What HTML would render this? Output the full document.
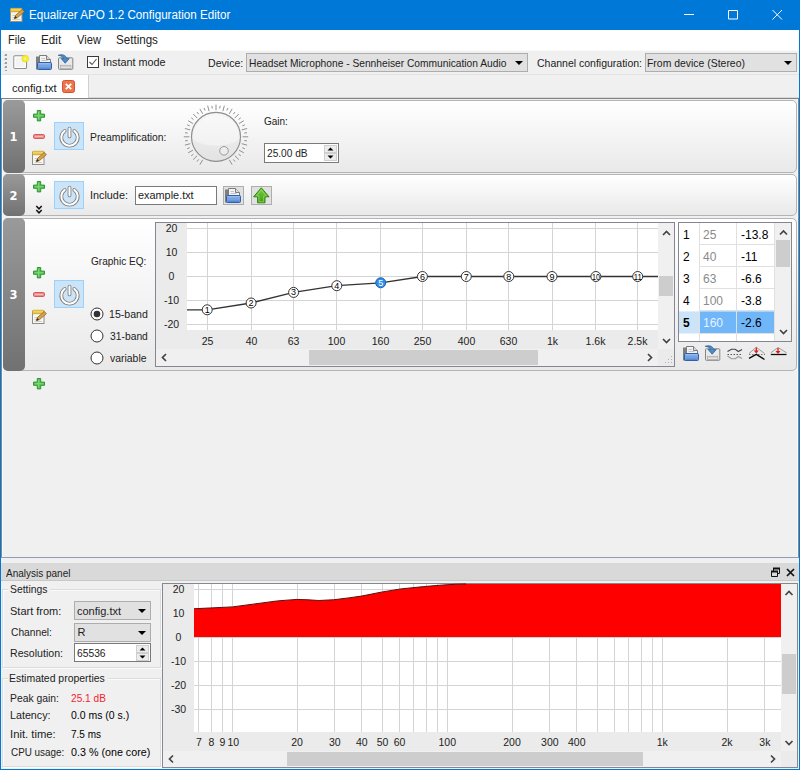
<!DOCTYPE html>
<html><head><meta charset="utf-8"><title>Equalizer APO 1.2 Configuration Editor</title>
<style>
*{box-sizing:border-box;margin:0;padding:0}
html,body{width:800px;height:770px;overflow:hidden;background:#f0f0f0;font-family:"Liberation Sans","DejaVu Sans",sans-serif;font-size:11px;color:#000}
.a{position:absolute}
#win{position:absolute;left:0;top:0;width:800px;height:770px;overflow:hidden;background:#f0f0f0}
.t{position:absolute;white-space:nowrap;line-height:14px;height:14px;font-size:11px;transform-origin:0 50%;color:#222}
.combo{position:absolute;background:#e1e1e1;border:1px solid #adadad}
.arr{position:absolute;width:0;height:0;border-left:4px solid transparent;border-right:4px solid transparent;border-top:4px solid #000}
.row{position:absolute;left:3px;width:794px;border:1px solid #b4b4b4;border-radius:5px;background:linear-gradient(#ffffff,#e9e9e9)}
.strip{position:absolute;left:-1px;top:-1px;bottom:-1px;width:22px;border-radius:5px;background:linear-gradient(#9a9a9a,#717171);color:#fff;font-weight:bold;font-size:11.500px;font-family:"DejaVu Sans","Liberation Sans",sans-serif}
.strip span{position:absolute;left:-.5px;width:22px;text-align:center;top:50%;margin-top:-7.500px;line-height:16px}
.pw{position:absolute;left:50px;width:30px;height:28px;background:#cce4f7;border:1px solid #99d1ff}
.grp{position:absolute;border:1px solid #dcdcdc;box-shadow:1px 1px 0 #fbfbfb, inset 1px 1px 0 #fbfbfb}
</style></head><body>
<div id="win">
<div class="a" style="left:0;top:0;width:800px;height:30px;background:#0078d7"></div>
<div class="t" id="ttl" style="left:29.03px;top:8px;font-size:12px;color:#fff;transform:scaleX(0.9710)">Equalizer APO 1.2 Configuration Editor</div>
<svg class="a" style="left:9px;top:7px" width="16" height="16" viewBox="0 0 16 16"><rect x="1.500" y="2.500" width="11.500" height="12" fill="#f6f4ea" stroke="#9a927c"/><rect x="1.500" y="1.300" width="11.500" height="3.400" rx=".8" fill="#eccb4c" stroke="#c79a22" stroke-width=".8"/><path d="M3 1.600v1.200M5 1.600v1.200M7 1.600v1.200M9 1.600v1.200M11 1.600v1.200" stroke="#f8e48c" stroke-width=".9"/><path d="M3.500 8.500h5M3.500 10.500h3M3.500 12.500h7.500" stroke="#cfcfc8"/><path d="M5.300 11.700l1.200-3.300 6.800-5.900 2 2.200-6.800 5.900z" fill="#d9a24e" stroke="#8a6224" stroke-width=".8"/><path d="M5.300 11.700l1-2.700 1.700 1.800z" fill="#3a2a1a"/></svg>
<svg class="a" style="left:662px;top:0" width="138" height="30"><path d="M22 14.500h10M66.500 10.500h9v8.500h-9zM110.500 10l9.500 9.500m0-9.500l-9.500 9.500" stroke="#fff" fill="none" stroke-width="1"/></svg>
<div class="a" style="left:0;top:30px;width:800px;height:20px;background:#fff"></div>
<div class="t" id="m1" style="left:8.08px;top:33px;font-size:12px;transform:scaleX(0.9167)">File</div>
<div class="t" id="m2" style="left:40.52px;top:33px;font-size:12px;transform:scaleX(0.9750)">Edit</div>
<div class="t" id="m3" style="left:76.50px;top:33px;font-size:12px;transform:scaleX(0.9308)">View</div>
<div class="t" id="m4" style="left:116.03px;top:33px;font-size:12px;transform:scaleX(0.9667)">Settings</div>
<div class="a" style="left:0;top:50px;width:800px;height:1px;background:#fafafa"></div>
<div class="a" style="left:0;top:74px;width:800px;height:1px;background:#e3e3e3"></div>
<svg class="a" style="left:4px;top:53px" width="4" height="18"><rect x="1" y="1" width="2" height="2" fill="#a0a0a0"/><rect x="0" y="2" width="1" height="1" fill="#c8c8c8"/><rect x="1" y="5" width="2" height="2" fill="#a0a0a0"/><rect x="0" y="6" width="1" height="1" fill="#c8c8c8"/><rect x="1" y="9" width="2" height="2" fill="#a0a0a0"/><rect x="0" y="10" width="1" height="1" fill="#c8c8c8"/><rect x="1" y="13" width="2" height="2" fill="#a0a0a0"/><rect x="0" y="14" width="1" height="1" fill="#c8c8c8"/><rect x="1" y="17" width="2" height="2" fill="#a0a0a0"/><rect x="0" y="18" width="1" height="1" fill="#c8c8c8"/></svg>
<svg class="a" style="left:12px;top:54px" width="18" height="16" viewBox="0 0 18 16"><rect x="1.900" y="1.900" width="12.600" height="12.600" rx="1" fill="#f4f4f4" stroke="#8c8c8c" stroke-width="1.100"/><rect x="3" y="3" width="10.400" height="10.400" fill="none" stroke="#fff"/><circle cx="13.200" cy="4.700" r="3.400" fill="#f3ec3a" stroke="#e6de2a" stroke-width=".8"/><circle cx="13.200" cy="4.700" r="1" fill="#fbf8a0"/></svg>
<svg class="a" style="left:35px;top:54px" width="18" height="17" viewBox="0 0 18 17"><path d="M1 2.500h3.500v13h-3.500z" fill="#7e7e7e"/><path d="M4.500 1.500h7l4 4v7h-11z" fill="#f3f3f3" stroke="#7c7c7c"/><path d="M11.500 1.500v4h4" fill="#dcdcdc" stroke="#7c7c7c"/><path d="M6.500 4.500h3.500M6.500 6.500h6" stroke="#c4c4c4"/><rect x="2.500" y="8.500" width="14" height="7" rx="1" fill="#75a2e0" stroke="#2f60aa"/><path d="M3.500 9.800h12" stroke="#a4c6f0"/><path d="M3.500 14.200h12" stroke="#4a7ec8"/></svg>
<svg class="a" style="left:57px;top:54px" width="17" height="17" viewBox="0 0 17 17"><rect x="1.500" y="3.800" width="14.300" height="11.500" rx=".8" fill="#e9e9e9" stroke="#858585"/><rect x="3.500" y="11.300" width="10.300" height="3" fill="#f8f8f8" stroke="#a0a0a0" stroke-width=".7"/><path d="M4.500 12.800h8.500" stroke="#8a8a8a" stroke-dasharray="1 1"/><path d="M1.200 1.300c4-1.300 7.800-.3 8.400 3.300h2.600l-4 4.600-4-4.600h2.500c-.4-1.700-2.300-2.900-5.500-3.300z" fill="#4d8bc8" stroke="#2a6296" stroke-width=".8" stroke-linejoin="round"/></svg>
<div class="a" style="left:87px;top:56px;width:12px;height:12px;background:#fff;border:1px solid #3a3a3a"></div>
<svg class="a" style="left:87px;top:56px" width="12" height="12"><path d="M2.500 6l2.500 2.500 4.500-5.500" stroke="#555" fill="none" stroke-width="1.100"/></svg>
<div class="t" id="im" style="left:103.02px;top:55px;transform:scaleX(0.9839)">Instant mode</div>
<div class="t" id="dv" style="left:207.74px;top:56px;transform:scaleX(0.9600)">Device:</div>
<div class="combo" style="left:246px;top:53px;width:282px;height:19px"></div>
<div class="t" id="hm" style="left:248.57px;top:56px;transform:scaleX(0.9293)">Headset Microphone - Sennheiser Communication Audio</div>
<div class="arr" style="left:515px;top:61px"></div>
<div class="t" id="cc" style="left:537.00px;top:56px;transform:scaleX(0.9541)">Channel configuration:</div>
<div class="combo" style="left:645px;top:53px;width:152px;height:19px"></div>
<div class="t" id="fd" style="left:647.35px;top:56px;transform:scaleX(0.9480)">From device (Stereo)</div>
<div class="arr" style="left:784px;top:61px"></div>
<div class="a" style="left:0;top:97px;width:800px;height:1px;background:#dadada"></div>
<div class="a" style="left:0;top:98px;width:800px;height:1px;background:#828282"></div>
<div class="a" style="left:1px;top:75px;width:88px;height:23px;background:#fff;border-right:1px solid #d0d0d0"></div>
<div class="t" id="cf" style="left:12.40px;top:81px;transform:scaleX(1.0136)">config.txt</div>
<svg class="a" style="left:62px;top:80px" width="13" height="13"><rect x=".5" y=".5" width="12" height="12" rx="2" fill="#e9764c" stroke="#dc4f30"/><path d="M3.800 3.800l5.400 5.400m0-5.400l-5.400 5.400" stroke="#fff" stroke-width="1.900"/></svg>
<div class="a" style="left:1px;top:99px;width:797px;height:458px;background:#f0f0f0"></div>
<div class="a" style="left:1px;top:557px;width:798px;height:1px;background:#8e9db3"></div>
<div class="a" style="left:1px;top:99px;width:1px;height:458px;background:#878787"></div>
<div class="a" style="left:2px;top:99px;width:1px;height:458px;background:#f8f8f8"></div>
<div class="a" style="left:798px;top:99px;width:1px;height:458px;background:#878787"></div>
<div class="a" style="left:797px;top:99px;width:1px;height:458px;background:#f8f8f8"></div>
<div class="row" style="top:100px;height:73px"><div class="strip"><span>1</span></div></div>
<svg class="a" style="left:32.5px;top:109.8px" width="12" height="12"><path d="M4.300 .5h3.400v3.600h3.800v3.200h-3.800v3.600h-3.400v-3.600h-3.800v-3.200h3.800z" fill="#5fc456" stroke="#2c9634" stroke-width="1" stroke-linejoin="round"/><path d="M5.500 2v7.400M2 5.700h8" stroke="#7fd678" stroke-width="1"/></svg>
<svg class="a" style="left:32.5px;top:134.2px" width="12" height="5"><rect x=".5" y=".5" width="11" height="4" rx="1.200" fill="#ec8c8c" stroke="#d65c5c"/><path d="M2 2.500h8" stroke="#f6bcbc"/></svg>
<svg class="a" style="left:31px;top:150px" width="16" height="16"><rect x="1.500" y="2.500" width="11.500" height="12" fill="#f8f7f0" stroke="#8e8e8e"/><rect x="1.500" y="1.300" width="11.500" height="3.400" rx=".8" fill="#eccb4c" stroke="#c79a22" stroke-width=".8"/><path d="M3 1.600v1.200M5 1.600v1.200M7 1.600v1.200M9 1.600v1.200M11 1.600v1.200" stroke="#f8e48c" stroke-width=".9"/><path d="M3.500 8.500h5M3.500 10.500h3M3.500 12.500h7.500" stroke="#cfcfcf"/><path d="M5.300 11.700l1.200-3.300 6.800-5.900 2 2.200-6.800 5.900z" fill="#d9a24e" stroke="#8a6224" stroke-width=".8"/><path d="M5.300 11.700l1-2.700 1.700 1.800z" fill="#3a2a1a"/></svg>
<div class="a" style="left:54px;top:122px;width:30px;height:28px;background:#cce4f7;border:1px solid #99d1ff"></div>
<svg class="a" style="left:54px;top:122px" width="30" height="28"><g fill="none" stroke-linecap="round"><path d="M10.700 8.900a8.200 8.200 0 1 0 9.600 0" stroke="#7e7e7e" stroke-width="3.700"/><path d="M15.500 6.500v8" stroke="#7e7e7e" stroke-width="3.700"/><path d="M10.700 8.900a8.200 8.200 0 1 0 9.600 0" stroke="#fff" stroke-width="2"/><path d="M15.500 6.500v8" stroke="#fff" stroke-width="2"/></g></svg>
<div class="t" id="pa" style="left:90.06px;top:130px;transform:scaleX(0.9400)">Preamplification:</div>
<svg class="a" style="left:180px;top:101px" width="72" height="72" viewBox="-36 -35.800 72 72"><defs><linearGradient id="dg" x1="0" y1="0" x2="0" y2="1"><stop offset="0" stop-color="#f6f6f6"/><stop offset="1" stop-color="#e2e2e2"/></linearGradient></defs><path d="M-13.30 23.04L-16.10 27.89" stroke="#909090" stroke-width="1"/><path d="M-17.35 22.61L-18.99 24.75" stroke="#909090" stroke-width="1"/><path d="M-18.81 18.81L-22.77 22.77" stroke="#909090" stroke-width="1"/><path d="M-22.61 17.35L-24.75 18.99" stroke="#909090" stroke-width="1"/><path d="M-23.04 13.30L-27.89 16.10" stroke="#909090" stroke-width="1"/><path d="M-26.33 10.91L-28.83 11.94" stroke="#909090" stroke-width="1"/><path d="M-25.69 6.88L-31.10 8.33" stroke="#909090" stroke-width="1"/><path d="M-28.26 3.72L-30.93 4.07" stroke="#909090" stroke-width="1"/><path d="M-26.60 -0.00L-32.20 -0.00" stroke="#909090" stroke-width="1"/><path d="M-28.26 -3.72L-30.93 -4.07" stroke="#909090" stroke-width="1"/><path d="M-25.69 -6.88L-31.10 -8.33" stroke="#909090" stroke-width="1"/><path d="M-26.33 -10.91L-28.83 -11.94" stroke="#909090" stroke-width="1"/><path d="M-23.04 -13.30L-27.89 -16.10" stroke="#909090" stroke-width="1"/><path d="M-22.61 -17.35L-24.75 -18.99" stroke="#909090" stroke-width="1"/><path d="M-18.81 -18.81L-22.77 -22.77" stroke="#909090" stroke-width="1"/><path d="M-17.35 -22.61L-18.99 -24.75" stroke="#909090" stroke-width="1"/><path d="M-13.30 -23.04L-16.10 -27.89" stroke="#909090" stroke-width="1"/><path d="M-10.91 -26.33L-11.94 -28.83" stroke="#909090" stroke-width="1"/><path d="M-6.88 -25.69L-8.33 -31.10" stroke="#909090" stroke-width="1"/><path d="M-3.72 -28.26L-4.07 -30.93" stroke="#909090" stroke-width="1"/><path d="M0.00 -26.60L0.00 -32.20" stroke="#909090" stroke-width="1"/><path d="M3.72 -28.26L4.07 -30.93" stroke="#909090" stroke-width="1"/><path d="M6.88 -25.69L8.33 -31.10" stroke="#909090" stroke-width="1"/><path d="M10.91 -26.33L11.94 -28.83" stroke="#909090" stroke-width="1"/><path d="M13.30 -23.04L16.10 -27.89" stroke="#909090" stroke-width="1"/><path d="M17.35 -22.61L18.99 -24.75" stroke="#909090" stroke-width="1"/><path d="M18.81 -18.81L22.77 -22.77" stroke="#909090" stroke-width="1"/><path d="M22.61 -17.35L24.75 -18.99" stroke="#909090" stroke-width="1"/><path d="M23.04 -13.30L27.89 -16.10" stroke="#909090" stroke-width="1"/><path d="M26.33 -10.91L28.83 -11.94" stroke="#909090" stroke-width="1"/><path d="M25.69 -6.88L31.10 -8.33" stroke="#909090" stroke-width="1"/><path d="M28.26 -3.72L30.93 -4.07" stroke="#909090" stroke-width="1"/><path d="M26.60 -0.00L32.20 -0.00" stroke="#909090" stroke-width="1"/><path d="M28.26 3.72L30.93 4.07" stroke="#909090" stroke-width="1"/><path d="M25.69 6.88L31.10 8.33" stroke="#909090" stroke-width="1"/><path d="M26.33 10.91L28.83 11.94" stroke="#909090" stroke-width="1"/><path d="M23.04 13.30L27.89 16.10" stroke="#909090" stroke-width="1"/><path d="M22.61 17.35L24.75 18.99" stroke="#909090" stroke-width="1"/><path d="M18.81 18.81L22.77 22.77" stroke="#909090" stroke-width="1"/><path d="M17.35 22.61L18.99 24.75" stroke="#909090" stroke-width="1"/><path d="M13.30 23.04L16.10 27.89" stroke="#909090" stroke-width="1"/><circle cx="0" cy="0" r="24.500" fill="url(#dg)" stroke="#8e8e8e" stroke-width="1.150"/><path d="M-23.500 2a23.500 23.500 0 0 1 47 0c-8 9-39 9-47 0z" fill="#fff" opacity=".4"/><circle cx="8" cy="14" r="4.300" fill="#ececec" stroke="#9a9a9a" stroke-width="1"/></svg>
<div class="t" id="gn" style="left:263.70px;top:114px;transform:scaleX(0.9077)">Gain:</div>
<div class="a" style="left:264px;top:143px;width:75px;height:20px;background:#fff;border:1px solid #7a7a7a"></div>
<div class="t" id="g25" style="left:267.00px;top:146px;transform:scaleX(0.9227)">25.00 dB</div>
<svg class="a" style="left:324px;top:145px" width="13" height="16"><rect x=".5" y=".5" width="12" height="7" fill="#ececec" stroke="#cfcfcf"/><rect x=".5" y="8.500" width="12" height="7" fill="#ececec" stroke="#cfcfcf"/><path d="M3.500 5.500l3-3 3 3zM3.500 10.500l3 3 3-3z" fill="#000"/></svg>
<div class="row" style="top:174px;height:42px"><div class="strip"><span>2</span></div></div>
<svg class="a" style="left:32.5px;top:180.8px" width="12" height="12"><path d="M4.300 .5h3.400v3.600h3.800v3.200h-3.800v3.600h-3.400v-3.600h-3.800v-3.200h3.800z" fill="#5fc456" stroke="#2c9634" stroke-width="1" stroke-linejoin="round"/><path d="M5.500 2v7.400M2 5.700h8" stroke="#7fd678" stroke-width="1"/></svg>
<div class="a" style="left:54px;top:181px;width:30px;height:28px;background:#cce4f7;border:1px solid #99d1ff"></div>
<svg class="a" style="left:54px;top:181px" width="30" height="28"><g fill="none" stroke-linecap="round"><path d="M10.700 8.900a8.200 8.200 0 1 0 9.600 0" stroke="#7e7e7e" stroke-width="3.700"/><path d="M15.500 6.500v8" stroke="#7e7e7e" stroke-width="3.700"/><path d="M10.700 8.900a8.200 8.200 0 1 0 9.600 0" stroke="#fff" stroke-width="2"/><path d="M15.500 6.500v8" stroke="#fff" stroke-width="2"/></g></svg>
<svg class="a" style="left:35px;top:205px" width="8" height="10"><path d="M1.300 1l2.700 2.800 2.700-2.800M1.300 5l2.700 2.800 2.700-2.800" fill="none" stroke="#111" stroke-width="1.500"/></svg>
<div class="t" id="inc" style="left:90.02px;top:188px;transform:scaleX(0.9838)">Include:</div>
<div class="a" style="left:135px;top:186px;width:82px;height:19px;background:#fff;border:1px solid #7a7a7a"></div>
<div class="t" id="ex" style="left:137.60px;top:188px;transform:scaleX(0.9893)">example.txt</div>
<div class="a" style="left:223px;top:186px;width:21px;height:19px;background:#e1e1e1;border:1px solid #adadad"></div>
<svg class="a" style="left:224px;top:186.500px" width="18" height="17" viewBox="0 0 18 17"><path d="M1 2.500h3.500v13h-3.500z" fill="#7e7e7e"/><path d="M4.500 1.500h7l4 4v7h-11z" fill="#f3f3f3" stroke="#7c7c7c"/><path d="M11.500 1.500v4h4" fill="#dcdcdc" stroke="#7c7c7c"/><path d="M6.500 4.500h3.500M6.500 6.500h6" stroke="#c4c4c4"/><rect x="2.500" y="8.500" width="14" height="7" rx="1" fill="#75a2e0" stroke="#2f60aa"/><path d="M3.500 9.800h12" stroke="#a4c6f0"/><path d="M3.500 14.200h12" stroke="#4a7ec8"/></svg>
<div class="a" style="left:251px;top:186px;width:21px;height:19px;background:#e1e1e1;border:1px solid #adadad"></div>
<svg class="a" style="left:252px;top:186px" width="19" height="19"><defs><linearGradient id="ug" x1="0" y1="0" x2="0" y2="1"><stop offset="0" stop-color="#7ad046"/><stop offset="1" stop-color="#3f9e14"/></linearGradient></defs><path d="M9.300 1.800l7.700 9h-4v6h-7.400v-6h-4z" fill="url(#ug)" stroke="#2f8410" stroke-linejoin="round"/><path d="M9.300 3.800l5 6h-2.600v6h-4.800v-6h-2.600z" fill="none" stroke="#a4e27c" stroke-width=".8" opacity=".8"/></svg>
<div class="row" style="top:218px;height:153px"><div class="strip"><span>3</span></div></div>
<svg class="a" style="left:32.5px;top:266.8px" width="12" height="12"><path d="M4.300 .5h3.400v3.600h3.800v3.200h-3.800v3.600h-3.400v-3.600h-3.800v-3.200h3.800z" fill="#5fc456" stroke="#2c9634" stroke-width="1" stroke-linejoin="round"/><path d="M5.500 2v7.400M2 5.700h8" stroke="#7fd678" stroke-width="1"/></svg>
<svg class="a" style="left:32.5px;top:292.2px" width="12" height="5"><rect x=".5" y=".5" width="11" height="4" rx="1.200" fill="#ec8c8c" stroke="#d65c5c"/><path d="M2 2.500h8" stroke="#f6bcbc"/></svg>
<svg class="a" style="left:31px;top:309px" width="16" height="16"><rect x="1.500" y="2.500" width="11.500" height="12" fill="#f8f7f0" stroke="#8e8e8e"/><rect x="1.500" y="1.300" width="11.500" height="3.400" rx=".8" fill="#eccb4c" stroke="#c79a22" stroke-width=".8"/><path d="M3 1.600v1.200M5 1.600v1.200M7 1.600v1.200M9 1.600v1.200M11 1.600v1.200" stroke="#f8e48c" stroke-width=".9"/><path d="M3.500 8.500h5M3.500 10.500h3M3.500 12.500h7.500" stroke="#cfcfcf"/><path d="M5.300 11.700l1.200-3.300 6.800-5.900 2 2.200-6.800 5.900z" fill="#d9a24e" stroke="#8a6224" stroke-width=".8"/><path d="M5.300 11.700l1-2.700 1.700 1.800z" fill="#3a2a1a"/></svg>
<div class="a" style="left:54px;top:280px;width:30px;height:28px;background:#cce4f7;border:1px solid #99d1ff"></div>
<svg class="a" style="left:54px;top:280px" width="30" height="28"><g fill="none" stroke-linecap="round"><path d="M10.700 8.900a8.200 8.200 0 1 0 9.600 0" stroke="#7e7e7e" stroke-width="3.700"/><path d="M15.500 6.500v8" stroke="#7e7e7e" stroke-width="3.700"/><path d="M10.700 8.900a8.200 8.200 0 1 0 9.600 0" stroke="#fff" stroke-width="2"/><path d="M15.500 6.500v8" stroke="#fff" stroke-width="2"/></g></svg>
<div class="t" id="geq" style="left:91.00px;top:254px;transform:scaleX(0.9133)">Graphic EQ:</div>
<svg class="a" style="left:90px;top:307px" width="14" height="14"><circle cx="7" cy="7" r="6" fill="#fff" stroke="#333"/><circle cx="7" cy="7" r="3.300" fill="#333"/></svg>
<div class="t" id="b15" style="left:109.04px;top:307px;transform:scaleX(0.9615)">15-band</div>
<svg class="a" style="left:90px;top:329px" width="14" height="14"><circle cx="7" cy="7" r="6" fill="#fff" stroke="#333"/></svg>
<div class="t" id="b31" style="left:110.00px;top:329px;transform:scaleX(0.9375)">31-band</div>
<svg class="a" style="left:90px;top:351px" width="14" height="14"><circle cx="7" cy="7" r="6" fill="#fff" stroke="#333"/></svg>
<div class="t" id="bvar" style="left:110.00px;top:351px;transform:scaleX(0.9474)">variable</div>
<svg class="a" style="left:155px;top:222px" width="520" height="145" font-family="Liberation Sans, sans-serif" font-size="11"><rect x=".5" y=".5" width="519" height="144" fill="#ebebeb" stroke="#828790"/><rect x="32" y="1" width="471" height="107" fill="#fff"/><path d="M32 6.5H503" stroke="#d4d4d4"/><text x="16.5" y="9.8" text-anchor="middle" font-size="10.500" fill="#222">20</text><path d="M32 30.5H503" stroke="#d4d4d4"/><text x="16.5" y="33.8" text-anchor="middle" font-size="10.500" fill="#222">10</text><path d="M32 54.5H503" stroke="#d4d4d4"/><text x="16.5" y="57.8" text-anchor="middle" font-size="10.500" fill="#222">0</text><path d="M32 78.5H503" stroke="#d4d4d4"/><text x="16.5" y="81.8" text-anchor="middle" font-size="10.500" fill="#222">-10</text><path d="M32 102.5H503" stroke="#d4d4d4"/><text x="16.5" y="105.8" text-anchor="middle" font-size="10.500" fill="#222">-20</text><path d="M52.5 1V108" stroke="#d4d4d4"/><text x="52.5" y="122.80000000000001" text-anchor="middle" font-size="10.500" fill="#222">25</text><path d="M96.5 1V108" stroke="#d4d4d4"/><text x="96.5" y="122.80000000000001" text-anchor="middle" font-size="10.500" fill="#222">40</text><path d="M138.5 1V108" stroke="#d4d4d4"/><text x="138.5" y="122.80000000000001" text-anchor="middle" font-size="10.500" fill="#222">63</text><path d="M181.5 1V108" stroke="#d4d4d4"/><text x="181.5" y="122.80000000000001" text-anchor="middle" font-size="10.500" fill="#222">100</text><path d="M225.5 1V108" stroke="#d4d4d4"/><text x="225.5" y="122.80000000000001" text-anchor="middle" font-size="10.500" fill="#222">160</text><path d="M267.5 1V108" stroke="#d4d4d4"/><text x="267.5" y="122.80000000000001" text-anchor="middle" font-size="10.500" fill="#222">250</text><path d="M311.5 1V108" stroke="#d4d4d4"/><text x="311.5" y="122.80000000000001" text-anchor="middle" font-size="10.500" fill="#222">400</text><path d="M353.5 1V108" stroke="#d4d4d4"/><text x="353.5" y="122.80000000000001" text-anchor="middle" font-size="10.500" fill="#222">630</text><path d="M397.5 1V108" stroke="#d4d4d4"/><text x="397.5" y="122.80000000000001" text-anchor="middle" font-size="10.500" fill="#222">1k</text><path d="M440.5 1V108" stroke="#d4d4d4"/><text x="440.5" y="122.80000000000001" text-anchor="middle" font-size="10.500" fill="#222">1.6k</text><path d="M482.5 1V108" stroke="#d4d4d4"/><text x="482.5" y="122.80000000000001" text-anchor="middle" font-size="10.500" fill="#222">2.5k</text><path d="M32.0 87.8L52.2 87.8L96.1 81.0L138.6 70.4L181.8 63.7L225.7 60.8L267.4 54.5L311.3 54.5L353.8 54.5L397.0 54.5L440.9 54.5L482.7 54.5L503.0 54.5" fill="none" stroke="#333" stroke-width="1.300"/><circle cx="52.2" cy="87.8" r="5" fill="#fff" stroke="#333" stroke-width="1"/><text x="52.2" y="90.8" text-anchor="middle" font-size="9" fill="#000">1</text><circle cx="96.1" cy="81.0" r="5" fill="#fff" stroke="#333" stroke-width="1"/><text x="96.1" y="84.0" text-anchor="middle" font-size="9" fill="#000">2</text><circle cx="138.6" cy="70.4" r="5" fill="#fff" stroke="#333" stroke-width="1"/><text x="138.6" y="73.4" text-anchor="middle" font-size="9" fill="#000">3</text><circle cx="181.8" cy="63.7" r="5" fill="#fff" stroke="#333" stroke-width="1"/><text x="181.8" y="66.7" text-anchor="middle" font-size="9" fill="#000">4</text><circle cx="225.7" cy="60.8" r="5" fill="#2f8fe8" stroke="#1c5fb0" stroke-width="1"/><text x="225.7" y="63.8" text-anchor="middle" font-size="9" fill="#fff">5</text><circle cx="267.4" cy="54.5" r="5" fill="#fff" stroke="#333" stroke-width="1"/><text x="267.4" y="57.5" text-anchor="middle" font-size="9" fill="#000">6</text><circle cx="311.3" cy="54.5" r="5" fill="#fff" stroke="#333" stroke-width="1"/><text x="311.3" y="57.5" text-anchor="middle" font-size="9" fill="#000">7</text><circle cx="353.8" cy="54.5" r="5" fill="#fff" stroke="#333" stroke-width="1"/><text x="353.8" y="57.5" text-anchor="middle" font-size="9" fill="#000">8</text><circle cx="397.0" cy="54.5" r="5" fill="#fff" stroke="#333" stroke-width="1"/><text x="397.0" y="57.5" text-anchor="middle" font-size="9" fill="#000">9</text><circle cx="440.9" cy="54.5" r="5" fill="#fff" stroke="#333" stroke-width="1"/><text x="440.9" y="57.5" text-anchor="middle" font-size="9" fill="#000" textLength="8" lengthAdjust="spacingAndGlyphs">10</text><circle cx="482.7" cy="54.5" r="5" fill="#fff" stroke="#333" stroke-width="1"/><text x="482.7" y="57.5" text-anchor="middle" font-size="9" fill="#000" textLength="8" lengthAdjust="spacingAndGlyphs">11</text><rect x="503" y="1" width="16" height="126" fill="#f0f0f0"/><rect x="504" y="54" width="14" height="20" fill="#cdcdcd"/><path d="M508 13l3.500-3.500 3.500 3.500M508 117l3.500 3.500 3.500-3.500" fill="none" stroke="#444" stroke-width="1.700"/><rect x="1" y="127" width="502" height="17" fill="#f0f0f0"/><rect x="154" y="128" width="229" height="15" fill="#cdcdcd"/><path d="M11 132l-3.500 3.500 3.500 3.500M493 132l3.500 3.500-3.500 3.500" fill="none" stroke="#444" stroke-width="1.700"/><rect x="516" y="134" width="1" height="1" fill="#b0b0b0"/><rect x="516" y="137" width="1" height="1" fill="#b0b0b0"/><rect x="516" y="140" width="1" height="1" fill="#b0b0b0"/><rect x="513" y="137" width="1" height="1" fill="#b0b0b0"/><rect x="513" y="140" width="1" height="1" fill="#b0b0b0"/><rect x="510" y="140" width="1" height="1" fill="#b0b0b0"/></svg>
<svg class="a" style="left:678px;top:222px" width="114" height="120" font-family="Liberation Sans, sans-serif" font-size="12"><rect x=".5" y=".5" width="113" height="119" fill="#fff" stroke="#828790"/><rect x="1" y="89.4" width="21" height="22.1" fill="#cce4f7"/><rect x="22" y="89.4" width="75" height="21.6" fill="#70b7fa"/><path d="M22 22.5H97" stroke="#e0e0e0"/><path d="M22 44.5H97" stroke="#e0e0e0"/><path d="M22 66.5H97" stroke="#e0e0e0"/><path d="M22 88.5H97" stroke="#e0e0e0"/><path d="M22 111.5H97" stroke="#e0e0e0"/><path d="M21.500 1V119M58.500 1V119M96.500 1V119" stroke="#e0e0e0"/><text x="5" y="16.6">1</text><text x="25" y="16.6" fill="#8a8a8a">25</text><text x="63" y="16.6">-13.8</text><text x="5" y="38.7">2</text><text x="25" y="38.7" fill="#8a8a8a">40</text><text x="63" y="38.7">-11</text><text x="5" y="60.8">3</text><text x="25" y="60.8" fill="#8a8a8a">63</text><text x="63" y="60.8">-6.6</text><text x="5" y="82.9">4</text><text x="25" y="82.9" fill="#8a8a8a">100</text><text x="63" y="82.9">-3.8</text><text x="5" y="105.0" font-weight="bold">5</text><text x="25" y="105.0" fill="#e8f2ff">160</text><text x="63" y="105.0">-2.6</text><rect x="97" y="1" width="16" height="118" fill="#f0f0f0"/><rect x="98" y="18" width="14" height="27" fill="#cdcdcd"/><path d="M102 12.500l3.500-3.500 3.500 3.500M102 108l3.500 3.500 3.500-3.500" fill="none" stroke="#444" stroke-width="1.700"/></svg>
<svg class="a" style="left:682px;top:345px" width="18" height="17" viewBox="0 0 18 17"><path d="M1 2.500h3.500v13h-3.500z" fill="#7e7e7e"/><path d="M4.500 1.500h7l4 4v7h-11z" fill="#f3f3f3" stroke="#7c7c7c"/><path d="M11.500 1.500v4h4" fill="#dcdcdc" stroke="#7c7c7c"/><path d="M6.500 4.500h3.500M6.500 6.500h6" stroke="#c4c4c4"/><rect x="2.500" y="8.500" width="14" height="7" rx="1" fill="#75a2e0" stroke="#2f60aa"/><path d="M3.500 9.800h12" stroke="#a4c6f0"/><path d="M3.500 14.200h12" stroke="#4a7ec8"/></svg>
<svg class="a" style="left:704px;top:345px" width="17" height="17" viewBox="0 0 17 17"><rect x="1.500" y="3.800" width="14.300" height="11.500" rx=".8" fill="#e9e9e9" stroke="#858585"/><rect x="3.500" y="11.300" width="10.300" height="3" fill="#f8f8f8" stroke="#a0a0a0" stroke-width=".7"/><path d="M4.500 12.800h8.500" stroke="#8a8a8a" stroke-dasharray="1 1"/><path d="M1.200 1.300c4-1.300 7.800-.3 8.400 3.300h2.600l-4 4.600-4-4.600h2.500c-.4-1.700-2.300-2.900-5.500-3.300z" fill="#4d8bc8" stroke="#2a6296" stroke-width=".8" stroke-linejoin="round"/></svg>
<svg class="a" style="left:727px;top:346px" width="17" height="16"><path d="M.5 5.500L4.500 3.200h3.800l3 2.300 3.700-2" fill="none" stroke="#444" stroke-width="1.100"/><path d="M.5 8.500h15" stroke="#555" stroke-dasharray="1.500 1.500"/><path d="M.5 10l4 2.800h3.800l3-2.300 3.700 2" fill="none" stroke="#9a9a9a" stroke-width="1.100"/></svg>
<svg class="a" style="left:748px;top:345px" width="18" height="17"><path d="M1 8.500L8.300 2.300 16.500 8.500" fill="none" stroke="#9c9c9c"/><path d="M1 9.500h16" stroke="#777" stroke-dasharray="1.500 1.500"/><path d="M1 13.300L8.300 9.300 16.500 14.500" fill="none" stroke="#111" stroke-width="1.400"/><path d="M8.300 2.500v4" stroke="#e81818" stroke-width="1.300"/><path d="M5.800 5.600l2.500 2.900 2.500-2.900z" fill="#e81818"/></svg>
<svg class="a" style="left:770px;top:345px" width="18" height="17"><path d="M.8 7.800L8 2.500 16.500 7.800" fill="none" stroke="#9c9c9c"/><path d="M.8 9.500h15.700" stroke="#111" stroke-width="1.300"/><path d="M8 3v4" stroke="#e81818" stroke-width="1.300"/><path d="M5.500 6l2.500 2.900 2.500-2.900z" fill="#e81818"/></svg>
<svg class="a" style="left:32.5px;top:377.8px" width="12" height="12"><path d="M4.300 .5h3.400v3.600h3.800v3.200h-3.800v3.600h-3.400v-3.600h-3.800v-3.200h3.800z" fill="#5fc456" stroke="#2c9634" stroke-width="1" stroke-linejoin="round"/><path d="M5.500 2v7.400M2 5.700h8" stroke="#7fd678" stroke-width="1"/></svg>
<div class="a" style="left:1px;top:563px;width:798px;height:18px;background:#d9d9d9;border-bottom:1px solid #c8c8c8"></div>
<div class="t" id="ap" style="left:5.50px;top:566px;transform:scaleX(0.9085)">Analysis panel</div>
<svg class="a" style="left:770px;top:567px" width="26" height="11"><path d="M3.500 1.500h6v5h-6z" fill="none" stroke="#111"/><path d="M3 1.500h7" stroke="#111" stroke-width="2"/><path d="M1.500 4.500h6v5h-6z" fill="#d9d9d9" stroke="#111"/><path d="M1 4.500h7" stroke="#111" stroke-width="2"/><path d="M17 2l7 7m0-7l-7 7" stroke="#111" stroke-width="1.700"/></svg>
<div class="grp" style="left:2px;top:589px;width:159px;height:79px"></div>
<div class="a" style="left:8px;top:583px;width:42px;height:12px;background:#f0f0f0"></div>
<div class="t" id="st" style="left:9.86px;top:582px;transform:scaleX(0.9410)">Settings</div>
<div class="t" id="sf" style="left:10.00px;top:604px;transform:scaleX(1.0000)">Start from:</div>
<div class="combo" style="left:74px;top:601px;width:77px;height:19px"></div>
<div class="t" id="cf2" style="left:77.00px;top:604px;transform:scaleX(1.0000)">config.txt</div>
<div class="arr" style="left:138px;top:609px"></div>
<div class="t" id="ch" style="left:11.00px;top:625px;transform:scaleX(0.9302)">Channel:</div>
<div class="combo" style="left:74px;top:623px;width:77px;height:19px"></div>
<div class="t " style="left:77.5px;top:625px;">R</div>
<div class="arr" style="left:138px;top:631px"></div>
<div class="t" id="rs" style="left:10.04px;top:646px;transform:scaleX(0.9623)">Resolution:</div>
<div class="a" style="left:74px;top:643px;width:77px;height:19px;background:#fff;border:1px solid #7a7a7a"></div>
<div class="t" id="n65" style="left:77.00px;top:646px;transform:scaleX(0.9333)">65536</div>
<svg class="a" style="left:136px;top:644.500px" width="13" height="16"><rect x=".5" y=".5" width="12" height="7" fill="#ececec" stroke="#cfcfcf"/><rect x=".5" y="8.500" width="12" height="7" fill="#ececec" stroke="#cfcfcf"/><path d="M3.500 5.500l3-3 3 3zM3.500 10.500l3 3 3-3z" fill="#000"/></svg>
<div class="grp" style="left:2px;top:678px;width:159px;height:89px"></div>
<div class="a" style="left:8px;top:672px;width:100px;height:12px;background:#f0f0f0"></div>
<div class="t" id="ep" style="left:9.05px;top:671px;transform:scaleX(0.9500)">Estimated properties</div>
<div class="t" id="pg" style="left:10.06px;top:691px;transform:scaleX(0.9400)">Peak gain:</div>
<div class="t" id="pgv" style="left:71.00px;top:691px;color:#f51c2c;transform:scaleX(0.9211)">25.1 dB</div>
<div class="t" id="lt" style="left:10.03px;top:708px;transform:scaleX(0.9750)">Latency:</div>
<div class="t" id="ltv" style="left:71.00px;top:708px;color:#000;transform:scaleX(0.9508)">0.0 ms (0 s.)</div>
<div class="t" id="it" style="left:9.98px;top:727px;transform:scaleX(1.0233)">Init. time:</div>
<div class="t" id="itv" style="left:71.00px;top:727px;color:#000;transform:scaleX(0.9091)">7.5 ms</div>
<div class="t" id="cu" style="left:11.00px;top:745px;transform:scaleX(0.8983)">CPU usage:</div>
<div class="t" id="cuv" style="left:71.00px;top:745px;color:#000;transform:scaleX(0.9753)">0.3 % (one core)</div>
<svg class="a" style="left:162px;top:583px" width="636" height="185" font-family="Liberation Sans, sans-serif" font-size="11"><rect x=".5" y=".5" width="635" height="184" fill="#ebebeb" stroke="#828790"/><rect x="32" y="1" width="587" height="148" fill="#fff"/><path d="M36.5 1V149" stroke="#d4d4d4"/><path d="M49.5 1V149" stroke="#d4d4d4"/><path d="M60.5 1V149" stroke="#d4d4d4"/><path d="M70.5 1V149" stroke="#d4d4d4"/><path d="M135.5 1V149" stroke="#d4d4d4"/><path d="M172.5 1V149" stroke="#d4d4d4"/><path d="M199.5 1V149" stroke="#d4d4d4"/><path d="M220.5 1V149" stroke="#d4d4d4"/><path d="M237.5 1V149" stroke="#d4d4d4"/><path d="M251.5 1V149" stroke="#d4d4d4"/><path d="M264.5 1V149" stroke="#d4d4d4"/><path d="M275.5 1V149" stroke="#d4d4d4"/><path d="M285.5 1V149" stroke="#d4d4d4"/><path d="M350.5 1V149" stroke="#d4d4d4"/><path d="M387.5 1V149" stroke="#d4d4d4"/><path d="M414.5 1V149" stroke="#d4d4d4"/><path d="M435.5 1V149" stroke="#d4d4d4"/><path d="M452.5 1V149" stroke="#d4d4d4"/><path d="M466.5 1V149" stroke="#d4d4d4"/><path d="M479.5 1V149" stroke="#d4d4d4"/><path d="M490.5 1V149" stroke="#d4d4d4"/><path d="M500.5 1V149" stroke="#d4d4d4"/><path d="M565.5 1V149" stroke="#d4d4d4"/><path d="M602.5 1V149" stroke="#d4d4d4"/><path d="M32 6.5H619" stroke="#d4d4d4"/><text x="16.5" y="9.8" text-anchor="middle" font-size="10.500" fill="#222">20</text><path d="M32 30.5H619" stroke="#d4d4d4"/><text x="16.5" y="33.8" text-anchor="middle" font-size="10.500" fill="#222">10</text><path d="M32 54.5H619" stroke="#d4d4d4"/><text x="16.5" y="57.8" text-anchor="middle" font-size="10.500" fill="#222">0</text><path d="M32 78.5H619" stroke="#d4d4d4"/><text x="16.5" y="81.8" text-anchor="middle" font-size="10.500" fill="#222">-10</text><path d="M32 102.5H619" stroke="#d4d4d4"/><text x="16.5" y="105.8" text-anchor="middle" font-size="10.500" fill="#222">-20</text><path d="M32 126.5H619" stroke="#d4d4d4"/><text x="16.5" y="129.8" text-anchor="middle" font-size="10.500" fill="#222">-30</text><text x="37.0" y="163.3" text-anchor="middle" font-size="10.500" fill="#222">7</text><text x="49.46" y="163.3" text-anchor="middle" font-size="10.500" fill="#222">8</text><text x="60.46" y="163.3" text-anchor="middle" font-size="10.500" fill="#222">9</text><text x="71.3" y="163.3" text-anchor="middle" font-size="10.500" fill="#222">10</text><text x="135.02" y="163.3" text-anchor="middle" font-size="10.500" fill="#222">20</text><text x="172.88" y="163.3" text-anchor="middle" font-size="10.500" fill="#222">30</text><text x="199.74" y="163.3" text-anchor="middle" font-size="10.500" fill="#222">40</text><text x="220.58" y="163.3" text-anchor="middle" font-size="10.500" fill="#222">50</text><text x="237.6" y="163.3" text-anchor="middle" font-size="10.500" fill="#222">60</text><text x="285.3" y="163.3" text-anchor="middle" font-size="10.500" fill="#222">100</text><text x="350.02" y="163.3" text-anchor="middle" font-size="10.500" fill="#222">200</text><text x="387.88" y="163.3" text-anchor="middle" font-size="10.500" fill="#222">300</text><text x="414.74" y="163.3" text-anchor="middle" font-size="10.500" fill="#222">400</text><text x="500.3" y="163.3" text-anchor="middle" font-size="10.500" fill="#222">1k</text><text x="565.02" y="163.3" text-anchor="middle" font-size="10.500" fill="#222">2k</text><text x="602.88" y="163.3" text-anchor="middle" font-size="10.500" fill="#222">3k</text><path d="M32 25.75L70.5 23.9L93 20.9L115.5 17.9L135 16.4L146 16.8L156.7 17.5L171.7 16.75L186.7 14.9L199.9 13L220.5 8.9L239 5.9L261.7 3.6L280.5 2L293 1.3L304 1L619 1L619 54L32 54Z" fill="#ff0000"/><path d="M32 25.75L70.5 23.9L93 20.9L115.5 17.9L135 16.4L146 16.8L156.7 17.5L171.7 16.75L186.7 14.9L199.9 13L220.5 8.9L239 5.9L261.7 3.6L280.5 2L293 1.3L304 1" fill="none" stroke="#5a1010" stroke-width="1"/><rect x="619" y="1" width="16" height="167" fill="#f0f0f0"/><rect x="620" y="71" width="14" height="40" fill="#cdcdcd"/><path d="M623.5 12l3.500-3.500 3.500 3.500M623.5 158l3.500 3.500 3.500-3.500" fill="none" stroke="#444" stroke-width="1.700"/><rect x="1" y="168" width="618" height="16" fill="#f0f0f0"/><rect x="125" y="169" width="356" height="14" fill="#cdcdcd"/><path d="M11 172.5l-3.500 3.500 3.500 3.500M609 172.5l3.500 3.500-3.500 3.500" fill="none" stroke="#444" stroke-width="1.700"/></svg>
<div class="a" style="left:0;top:30px;width:1px;height:740px;background:#0078d7"></div>
<div class="a" style="left:799px;top:30px;width:1px;height:740px;background:#0078d7"></div>
<div class="a" style="left:0;top:769px;width:800px;height:1px;background:#0078d7"></div>
</div>
</body></html>
